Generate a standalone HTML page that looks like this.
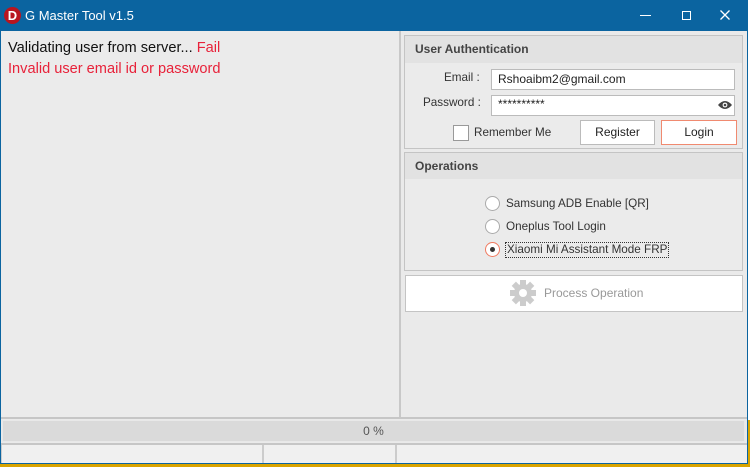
<!DOCTYPE html>
<html><head><style>
*{margin:0;padding:0;box-sizing:border-box}
body{width:750px;height:467px;overflow:hidden;background:#d9a400;font-family:"Liberation Sans",sans-serif;position:relative}
.a{position:absolute}
.win{left:0;top:0;width:748px;height:464px;background:#eaeaea;border:1px solid #0b64a0;border-top:none}
.title{left:0;top:0;width:748px;height:31px;background:#0b64a0;color:#fff;font-size:13px}
.t{font-size:11.7px;color:#333}
</style></head><body>
<div class="a" style="left:746px;top:0;width:4px;height:420px;background:#fff"></div>
<div class="a win"></div>
<div class="a title">
 <div class="a" style="left:4px;top:7px;width:17px;height:17px;border-radius:50%;background:#b8151f;color:#fff;font-weight:bold;font-size:13px;text-align:center;line-height:17px">D</div>
 <div class="a" style="left:25px;top:8px">G Master Tool v1.5</div>
 <div class="a" style="left:640px;top:15px;width:11px;height:1px;background:#fff"></div>
 <div class="a" style="left:682px;top:11px;width:9px;height:9px;border:1px solid #fff"></div>
 <svg class="a" style="left:720px;top:10px" width="10" height="10" viewBox="0 0 10 10"><path d="M0.5 0.5L9.5 9.5M9.5 0.5L0.5 9.5" stroke="#fff" stroke-width="1.3"/></svg>
</div>
<div class="a" style="left:1px;top:31px;width:400px;height:386px;background:#ebebeb;border-right:2px solid #c8c8c8"></div>
<div class="a" style="left:8px;top:40px;font-size:14.6px;color:#111">Validating user from server... <span style="color:#e8223a">Fail</span></div>
<div class="a" style="left:8px;top:61px;font-size:14.6px;color:#e8223a">Invalid user email id or password</div>
<div class="a" style="left:404px;top:35px;width:339px;height:114px;border:1px solid #c4c4c4;background:#ebebeb"></div>
<div class="a" style="left:405px;top:36px;width:337px;height:27px;background:#e2e2e2"></div>
<div class="a" style="left:415px;top:42px;font-size:12px;font-weight:bold;color:#444">User Authentication</div>
<div class="a t" style="left:444px;top:71px">Email :</div>
<div class="a t" style="left:423px;top:96px">Password :</div>
<div class="a" style="left:491px;top:69px;width:244px;height:21px;background:#fff;border:1px solid #bbb;font-size:12px;padding:2px 6px;color:#222">Rshoaibm2@gmail.com</div>
<div class="a" style="left:491px;top:95px;width:244px;height:21px;background:#fff;border:1px solid #bbb;font-size:12px;padding:1px 6px;color:#222">**********</div>
<svg class="a" style="left:717px;top:100px" width="16" height="10" viewBox="0 0 16 10"><path d="M1 5Q8-3 15 5Q8 13 1 5Z" fill="#444"/><circle cx="8" cy="5" r="2.4" fill="#fff"/><circle cx="8" cy="5" r="1.3" fill="#444"/></svg>
<div class="a" style="left:453px;top:125px;width:16px;height:16px;background:#fff;border:1px solid #999"></div>
<div class="a t" style="left:474px;top:126px">Remember Me</div>
<div class="a" style="left:580px;top:120px;width:75px;height:25px;background:#fff;border:1px solid #bbb;font-size:12px;text-align:center;line-height:23px;color:#222">Register</div>
<div class="a" style="left:661px;top:120px;width:76px;height:25px;background:#fff;border:1px solid #f08a70;font-size:12px;text-align:center;line-height:23px;color:#222">Login</div>
<div class="a" style="left:404px;top:152px;width:339px;height:119px;border:1px solid #c4c4c4;background:#ebebeb"></div>
<div class="a" style="left:405px;top:153px;width:337px;height:26px;background:#e2e2e2"></div>
<div class="a" style="left:415px;top:159px;font-size:12px;font-weight:bold;color:#444">Operations</div>
<div class="a" style="left:485px;top:196px;width:15px;height:15px;border-radius:50%;border:1px solid #aaa;background:#fff"></div>
<div class="a t" style="left:506px;top:197px">Samsung ADB Enable [QR]</div>
<div class="a" style="left:485px;top:219px;width:15px;height:15px;border-radius:50%;border:1px solid #aaa;background:#fff"></div>
<div class="a t" style="left:506px;top:220px">Oneplus Tool Login</div>
<div class="a" style="left:485px;top:242px;width:15px;height:15px;border-radius:50%;border:1px solid #f07a60;background:#fff"><div class="a" style="left:4px;top:4px;width:5px;height:5px;border-radius:50%;background:#333"></div></div>
<div class="a t" style="left:505px;top:242px;border:1px dotted #333;padding:0 1px;height:16px">Xiaomi Mi Assistant Mode FRP</div>
<div class="a" style="left:405px;top:275px;width:338px;height:37px;background:#fff;border:1px solid #c4c4c4"></div>
<svg class="a" style="left:509px;top:279px" width="28" height="28" viewBox="0 0 28 28"><g fill="#ccc"><circle cx="14" cy="14" r="9"/><g id="k"><rect x="11" y="1" width="6" height="26"/><rect x="1" y="11" width="26" height="6"/></g><use href="#k" transform="rotate(45 14 14)"/></g><circle cx="14" cy="14" r="4" fill="#fff"/></svg>
<div class="a" style="left:544px;top:286px;font-size:12px;color:#999">Process Operation</div>
<div class="a" style="left:1px;top:417px;width:746px;height:2px;background:#c6c6c6"></div>
<div class="a" style="left:2px;top:420px;width:743px;height:22px;background:#dadada;border:1px solid #e8e8e8;font-size:12px;color:#555;text-align:center;line-height:20px">0 %</div>
<div class="a" style="left:1px;top:443px;width:746px;height:2px;background:#c6c6c6"></div>
<div class="a" style="left:1px;top:445px;width:746px;height:18px;background:#f0f0f0"></div>
<div class="a" style="left:262px;top:445px;width:2px;height:18px;background:#ccc"></div>
<div class="a" style="left:395px;top:445px;width:2px;height:18px;background:#ccc"></div>
<div class="a" style="left:1px;top:445px;width:1px;height:18px;background:#ccc"></div>
</body></html>
